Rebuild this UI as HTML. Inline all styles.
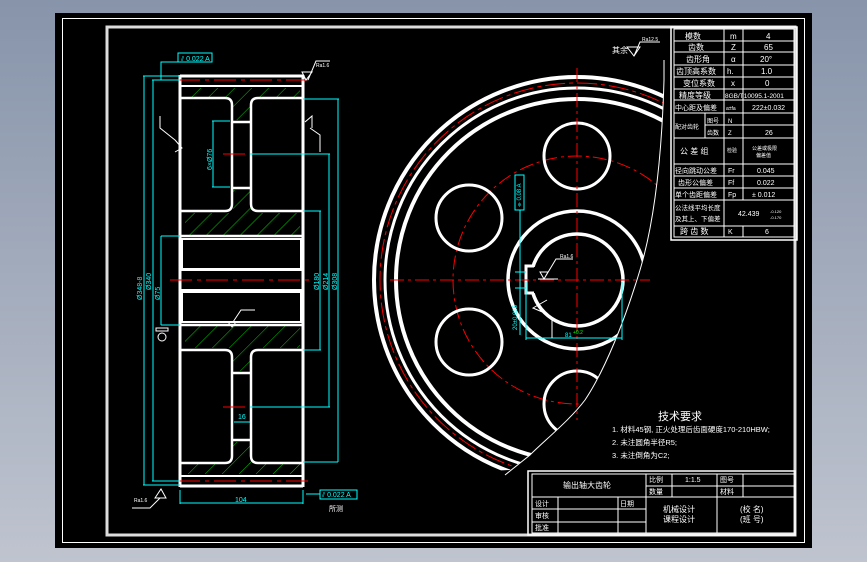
<!DOCTYPE html>
<html><head><meta charset="utf-8"><style>
html,body{margin:0;padding:0;width:867px;height:562px;overflow:hidden;background:linear-gradient(#8794aa,#bfc4cf);}
svg{display:block}
text{font-family:"Liberation Sans","Noto Sans CJK SC",sans-serif;fill:#fff}
</style></head><body>
<svg width="867" height="562" viewBox="0 0 867 562" xmlns="http://www.w3.org/2000/svg">
<defs>
<clipPath id="cl"><path d="M300 20 L664 20 L664 80 C662 150 655 220 640 270 C625 320 605 370 585 400 C570 420 545 440 530 455 L510 470 L300 480 Z"/></clipPath>
<pattern id="h" width="12" height="12" patternUnits="userSpaceOnUse" patternTransform="rotate(45)"><line x1="0" y1="0" x2="0" y2="12" stroke="#0c0" stroke-width="1"/></pattern>
</defs>
<rect x="55" y="13" width="757" height="535" fill="#000"/>
<rect x="62.5" y="18.5" width="742" height="524" fill="none" stroke="#fff" stroke-width="1"/>
<rect x="107" y="27" width="688" height="508" fill="none" stroke="#ddd" stroke-width="3"/>

<!-- section view -->
<g stroke="#fff" fill="none">
<rect x="185" y="88" width="115" height="10" fill="url(#h)" stroke="none"/>
<rect x="185" y="213" width="115" height="22" fill="url(#h)" stroke="none"/>
<rect x="185" y="326" width="115" height="22" fill="url(#h)" stroke="none"/>
<rect x="185" y="463" width="115" height="11" fill="url(#h)" stroke="none"/>
<rect x="233" y="98" width="18" height="22" fill="url(#h)" stroke="none"/>
<rect x="233" y="190" width="18" height="23" fill="url(#h)" stroke="none"/>
<rect x="233" y="348" width="18" height="23" fill="url(#h)" stroke="none"/>
<rect x="233" y="442" width="18" height="22" fill="url(#h)" stroke="none"/>
<line x1="180" y1="75" x2="180" y2="487" stroke-width="3"/>
<line x1="303" y1="75" x2="303" y2="487" stroke-width="3"/>
<line x1="180" y1="76" x2="303" y2="76" stroke-width="3"/>
<line x1="180" y1="486" x2="303" y2="486" stroke-width="3"/>
<line x1="180" y1="86" x2="303" y2="86" stroke-width="2"/>
<line x1="180" y1="476" x2="303" y2="476" stroke-width="2"/>
<path d="M180 98 H225 Q232 98 232 105 V204 Q232 211 225 211 H180" stroke-width="2.5"/>
<path d="M303 98 H258 Q251 98 251 105 V204 Q251 211 258 211 H303" stroke-width="2.5"/>
<path d="M180 350 H225 Q232 350 232 357 V456 Q232 463 225 463 H180" stroke-width="2.5"/>
<path d="M303 350 H258 Q251 350 251 357 V456 Q251 463 258 463 H303" stroke-width="2.5"/>
<line x1="232" y1="122" x2="251" y2="122" stroke-width="2.5"/>
<line x1="232" y1="188" x2="251" y2="188" stroke-width="2.5"/>
<line x1="232" y1="373" x2="251" y2="373" stroke-width="2.5"/>
<line x1="232" y1="440" x2="251" y2="440" stroke-width="2.5"/>
<line x1="180" y1="236" x2="303" y2="236" stroke-width="2.5"/>
<line x1="180" y1="325" x2="303" y2="325" stroke-width="2.5"/>
<rect x="182" y="239" width="119" height="30" stroke-width="2"/>
<rect x="182" y="292" width="119" height="30" stroke-width="2"/>
<line x1="180" y1="270" x2="303" y2="270" stroke-width="2"/>
<line x1="180" y1="290" x2="303" y2="290" stroke-width="2"/>
</g>
<g stroke="#f00" stroke-dasharray="22 5 4 5">
<line x1="178" y1="80" x2="310" y2="80"/>
<line x1="170" y1="280" x2="310" y2="280"/>
<line x1="178" y1="481" x2="310" y2="481"/>
<line x1="223" y1="154" x2="250" y2="154"/>
<line x1="223" y1="407" x2="250" y2="407"/>
</g>
<!-- dims -->
<g stroke="#0ff" fill="none" stroke-width="1">
<polyline points="143,76 180,76"/><line x1="144" y1="76" x2="144" y2="485"/><line x1="143" y1="485" x2="180" y2="485"/>
<polyline points="152,80 180,80"/><line x1="153" y1="80" x2="153" y2="481"/><line x1="152" y1="481" x2="180" y2="481"/>
<polyline points="161,236 180,236"/><line x1="161" y1="236" x2="161" y2="325"/><line x1="161" y1="325" x2="180" y2="325"/>
<line x1="303" y1="99" x2="339" y2="99"/><line x1="338" y1="99" x2="338" y2="462"/><line x1="303" y1="462" x2="338" y2="462"/>
<line x1="303" y1="211" x2="321" y2="211"/><line x1="320" y1="211" x2="320" y2="350"/><line x1="303" y1="350" x2="321" y2="350"/>
<line x1="250" y1="154" x2="330" y2="154"/><line x1="329" y1="154" x2="329" y2="407"/><line x1="250" y1="407" x2="330" y2="407"/>
<line x1="212" y1="121" x2="230" y2="121"/><line x1="213" y1="121" x2="213" y2="187"/><line x1="212" y1="187" x2="230" y2="187"/>
<line x1="180" y1="490" x2="180" y2="504"/><line x1="303" y1="490" x2="303" y2="504"/><line x1="180" y1="503" x2="303" y2="503"/>
<polyline points="161,80 161,62 178,62"/>
<rect x="178" y="53" width="34" height="9"/>
<rect x="320" y="490" width="37" height="9"/>
<line x1="306" y1="494" x2="320" y2="494"/>
<line x1="234" y1="422" x2="250" y2="422"/>
</g>
<g font-size="7" style="fill:#0ff">
<text x="181" y="61" style="fill:#0ff">⫽ 0.022 A</text>
<text x="322" y="497" style="fill:#0ff">⫽ 0.022 A</text>
<text x="235" y="502" style="fill:#0ff">104</text>
<text x="238" y="419" style="fill:#0ff">16</text>
<text transform="translate(142,300) rotate(-90)" style="fill:#0ff">Ø348-8</text>
<text transform="translate(151,290) rotate(-90)" style="fill:#0ff">Ø340</text>
<text transform="translate(160,300) rotate(-90)" style="fill:#0ff">Ø75</text>
<text transform="translate(319,290) rotate(-90)" style="fill:#0ff">Ø180</text>
<text transform="translate(328,290) rotate(-90)" style="fill:#0ff">Ø214</text>
<text transform="translate(337,290) rotate(-90)" style="fill:#0ff">Ø308</text>
<text transform="translate(212,170) rotate(-90)" style="fill:#0ff">6×Ø76</text>
</g>
<g stroke="#fff" fill="none" stroke-width="1">
<path d="M302 72 L312 72 L306 80 Z M308 80 L316 61 L330 61"/>
<path d="M175 140 L182 148 L175 152 M175 140 L160 128 L160 116"/>
<path d="M305 122 L312 116 L312 128 M310 128 L320 135 L320 152"/>
<path d="M228 322 L236 322 L232 327 Z M233 322 L241 310 L255 310"/>
<path d="M155 498 L161 489 L166 498 Z M160 498 L150 508 L132 508"/>
<rect x="156" y="328" width="12" height="3"/>
<circle cx="162" cy="337" r="4"/>
</g>
<text x="316" y="67" font-size="5">Ra1.6</text>
<text x="134" y="502" font-size="5">Ra1.6</text>
<text x="329" y="511" font-size="7">所测</text>

<!-- gear front view -->
<g clip-path="url(#cl)" fill="none">
<circle cx="577" cy="280" r="203" stroke="#fff" stroke-width="4"/>
<circle cx="577" cy="280" r="197" stroke="#f00" stroke-width="1" stroke-dasharray="20 4 4 4"/>
<circle cx="577" cy="280" r="192" stroke="#fff" stroke-width="3"/>
<circle cx="577" cy="280" r="181" stroke="#fff" stroke-width="4"/>
<circle cx="577" cy="280" r="124" stroke="#f00" stroke-width="1" stroke-dasharray="14 4 3 4"/>
<circle cx="577" cy="156" r="33" stroke="#fff" stroke-width="3"/>
<circle cx="469" cy="218" r="33" stroke="#fff" stroke-width="3"/>
<circle cx="469" cy="342" r="33" stroke="#fff" stroke-width="3"/>
<circle cx="577" cy="404" r="33" stroke="#fff" stroke-width="3"/>
<circle cx="577" cy="280" r="69" stroke="#fff" stroke-width="3.5"/>
<circle cx="577" cy="280" r="46" stroke="#fff" stroke-width="3.5"/>
</g>
<rect x="526" y="267" width="10" height="26" fill="#000"/>
<path d="M534 266 H526 V293 H534" stroke="#fff" stroke-width="3" fill="none"/>
<path d="M664 60 L664 80 C662 150 655 220 640 270 C625 320 605 370 585 400 C570 420 545 440 530 455 L505 475" stroke="#fff" fill="none"/>
<g stroke="#f00" stroke-dasharray="14 4 3 4">
<line x1="390" y1="280" x2="650" y2="280"/>
<line x1="577" y1="68" x2="577" y2="420"/>
</g>
<g stroke="#0ff" fill="none">
<line x1="520" y1="210" x2="520" y2="335"/>
<rect x="515" y="175" width="9" height="35"/>
<line x1="515" y1="272" x2="526" y2="272"/><line x1="515" y1="288" x2="526" y2="288"/>
<line x1="526" y1="282" x2="526" y2="340"/><line x1="622" y1="282" x2="622" y2="340"/>
<line x1="526" y1="338" x2="622" y2="338"/>
</g>
<text transform="translate(521,207) rotate(-90)" font-size="6" style="fill:#0ff">⌯ 0.08 A</text>
<text transform="translate(517,330) rotate(-90)" font-size="6" style="fill:#0ff">20±0.015</text>
<text x="565" y="337" font-size="6" style="fill:#0ff">81</text>
<text x="573" y="334" font-size="5" style="fill:#0f0">+0.2</text>
<g stroke="#fff" fill="none">
<path d="M540 272 L548 272 L544 279 Z M544 279 L556 259 L573 259 M538 279 L558 279"/>
<path d="M547 300 L533 308 L547 314 M540 310 L552 320 L552 338"/>
<path d="M627 47 L640 47 L634 56 Z M634 56 L640 42 L660 42"/>
</g>
<text x="560" y="258" font-size="5">Ra1.6</text>
<text x="642" y="41" font-size="5">Ra12.5</text>
<text x="612" y="53" font-size="8">其余</text>

<!-- param table -->
<rect x="671" y="27" width="126" height="213" fill="none" stroke="#fff" stroke-width="1.5"/>
<g stroke="#fff" stroke-width="1" fill="none">
<rect x="674" y="29" width="120" height="208"/>
<line x1="724" y1="29" x2="724" y2="237"/>
<line x1="743" y1="29" x2="743" y2="200"/>
<line x1="743" y1="226" x2="743" y2="237"/>
<line x1="674" y1="41" x2="794" y2="41"/><line x1="674" y1="52" x2="794" y2="52"/>
<line x1="674" y1="65" x2="794" y2="65"/><line x1="674" y1="77" x2="794" y2="77"/>
<line x1="674" y1="89" x2="794" y2="89"/><line x1="674" y1="100" x2="794" y2="100"/>
<line x1="674" y1="113" x2="794" y2="113"/><line x1="705" y1="125" x2="794" y2="125"/>
<line x1="705" y1="113" x2="705" y2="138"/>
<line x1="674" y1="138" x2="794" y2="138"/><line x1="674" y1="164" x2="794" y2="164"/>
<line x1="674" y1="176" x2="794" y2="176"/><line x1="674" y1="188" x2="794" y2="188"/>
<line x1="674" y1="200" x2="794" y2="200"/><line x1="674" y1="226" x2="794" y2="226"/>
</g>
<g font-size="8">
<text x="685" y="39">模数</text><text x="730" y="39">m</text><text x="766" y="39">4</text>
<text x="688" y="50">齿数</text><text x="731" y="50">Z</text><text x="764" y="50">65</text>
<text x="686" y="62">齿形角</text><text x="731" y="62">α</text><text x="760" y="62">20°</text>
<text x="676" y="74">齿顶高系数</text><text x="727" y="74">h.</text><text x="761" y="74">1.0</text>
<text x="683" y="86">变位系数</text><text x="731" y="86">x</text><text x="765" y="86">0</text>
<text x="679" y="98">精度等级</text><text x="725" y="98" font-size="6.5">8GB/T10095.1-2001</text>
<text x="675" y="110" font-size="7">中心距及偏差</text><text x="726" y="110" font-size="5">a±fa</text><text x="752" y="110" font-size="7">222±0.032</text>
<text x="675" y="129" font-size="6">配对齿轮</text><text x="707" y="123" font-size="6">图号</text><text x="707" y="135" font-size="6">齿数</text>
<text x="728" y="123" font-size="6">N</text><text x="728" y="135" font-size="6">Z</text><text x="765" y="135" font-size="7">26</text>
<text x="680" y="154">公 差 组</text><text x="727" y="152" font-size="5">检验</text>
<text x="752" y="150" font-size="5">公差或极限</text><text x="756" y="157" font-size="5">偏差值</text>
<text x="675" y="173" font-size="7">径向跳动公差</text><text x="728" y="173" font-size="7">Fr</text><text x="757" y="173" font-size="7">0.045</text>
<text x="678" y="185" font-size="7">齿形公偏差</text><text x="728" y="185" font-size="7">Ff</text><text x="757" y="185" font-size="7">0.022</text>
<text x="675" y="197" font-size="7">单个齿距偏差</text><text x="728" y="197" font-size="7">Fp</text><text x="752" y="197" font-size="7">± 0.012</text>
<text x="675" y="210" font-size="6.5">公法线平均长度</text><text x="675" y="221" font-size="6.5">及其上、下偏差</text>
<text x="738" y="216" font-size="7">42.439</text><text x="770" y="213" font-size="4">-0.120</text><text x="770" y="219" font-size="4">-0.170</text>
<text x="680" y="234">跨 齿 数</text><text x="728" y="234" font-size="7">K</text><text x="765" y="234" font-size="7">6</text>
</g>

<!-- tech requirements -->
<text x="658" y="420" font-size="11">技术要求</text>
<g font-size="7.5">
<text x="612" y="432">1. 材料45钢, 正火处理后齿面硬度170-210HBW;</text>
<text x="612" y="445">2. 未注圆角半径R5;</text>
<text x="612" y="458">3. 未注倒角为C2;</text>
</g>

<!-- title block -->
<rect x="528" y="471" width="267" height="64" fill="none" stroke="#fff" stroke-width="1.5"/>
<g stroke="#fff" stroke-width="1" fill="none">
<rect x="532" y="474" width="263" height="59"/>
<line x1="532" y1="497" x2="795" y2="497"/>
<line x1="646" y1="486" x2="795" y2="486"/>
<line x1="646" y1="474" x2="646" y2="533"/>
<line x1="672" y1="474" x2="672" y2="497"/>
<line x1="717" y1="474" x2="717" y2="533"/>
<line x1="743" y1="474" x2="743" y2="497"/>
<line x1="558" y1="497" x2="558" y2="533"/>
<line x1="618" y1="497" x2="618" y2="533"/>
<line x1="532" y1="509" x2="646" y2="509"/>
<line x1="532" y1="522" x2="646" y2="522"/>
</g>
<g font-size="7">
<text x="563" y="488" font-size="8">输出轴大齿轮</text>
<text x="649" y="482">比例</text><text x="685" y="482">1:1.5</text>
<text x="720" y="482">图号</text>
<text x="649" y="494">数量</text><text x="720" y="494">材料</text>
<text x="535" y="506">设计</text><text x="620" y="506">日期</text>
<text x="535" y="518">审核</text><text x="535" y="530">批准</text>
<text x="663" y="512" font-size="8">机械设计</text>
<text x="663" y="522" font-size="8">课程设计</text>
<text x="740" y="512" font-size="8">(校 名)</text>
<text x="740" y="522" font-size="8">(班 号)</text>
</g>
</svg>
</body></html>
